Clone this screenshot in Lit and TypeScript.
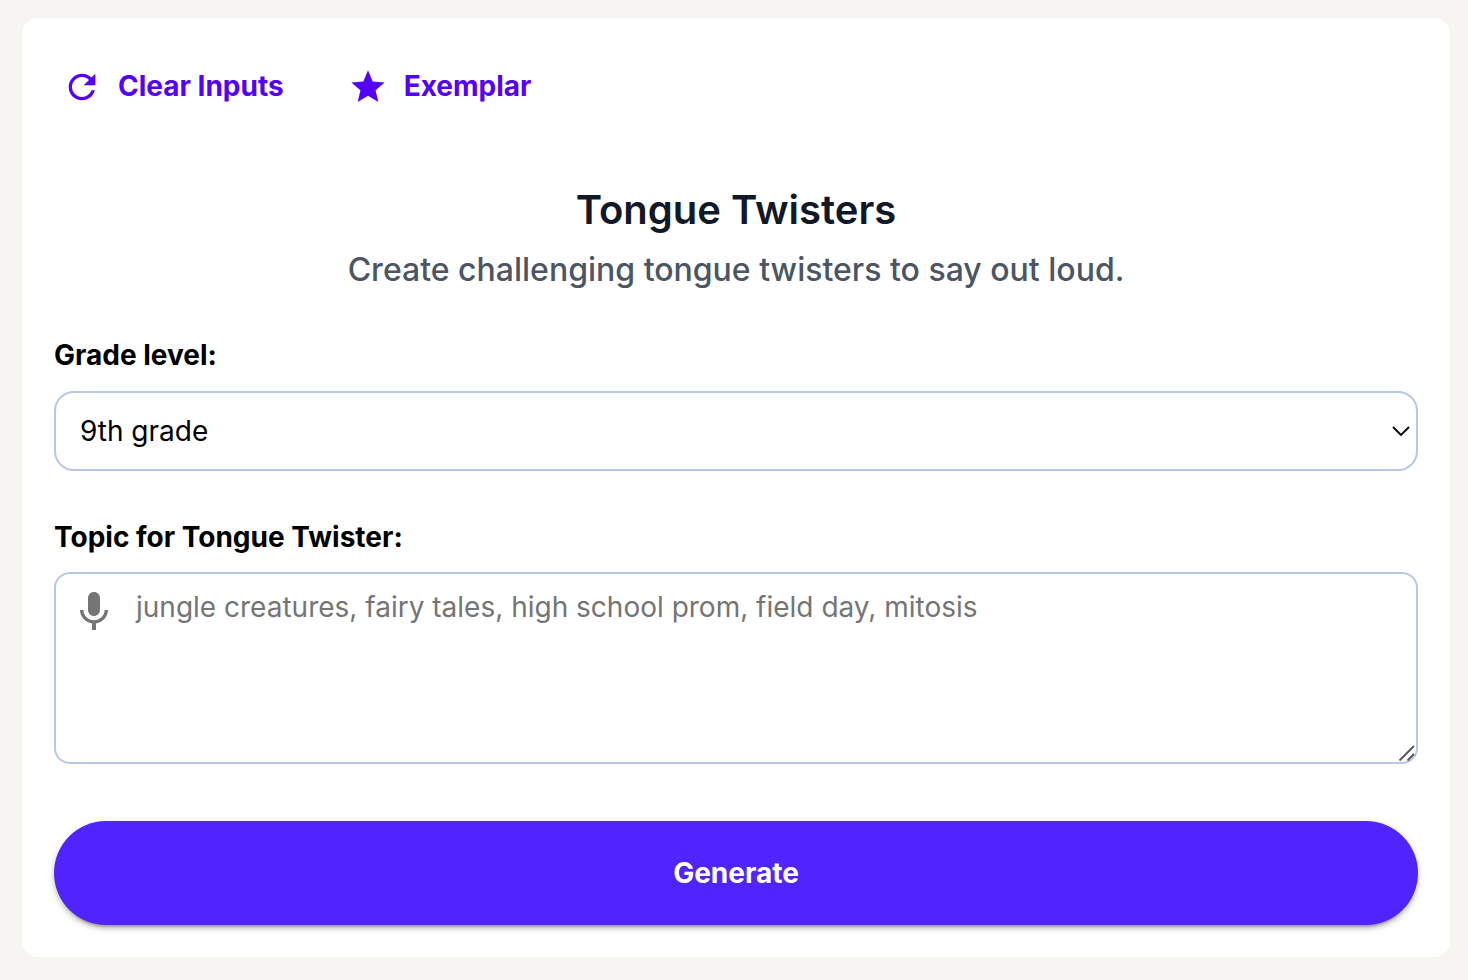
import {LitElement, html, css} from 'lit';
import {customElement, property, state} from 'lit/decorators.js';

@customElement('action-link')
export class ActionLink extends LitElement {
  static override styles = css`
    :host {
      display: inline-flex;
    }

    button {
      display: inline-flex;
      align-items: center;
      gap: 16px;
      height: 40px;
      padding: 0;
      border: none;
      background: none;
      color: #5300ff;
      font: inherit;
      font-size: 28px;
      font-weight: 700;
      line-height: 40px;
      white-space: nowrap;
      cursor: pointer;
    }

    span {
      padding-bottom: 2px;
    }

    svg {
      width: 40px;
      height: 40px;
      fill: currentColor;
    }
  `;

  @property() label = '';
  @property() icon: 'refresh' | 'star' = 'refresh';

  private get path(): string {
    return this.icon === 'refresh'
      ? 'M17.65 6.35C16.2 4.9 14.21 4 12 4c-4.42 0-7.99 3.58-7.99 8s3.57 8 7.99 8c3.73 0 6.84-2.55 7.73-6h-2.08c-.82 2.33-3.04 4-5.65 4-3.31 0-6-2.69-6-6s2.69-6 6-6c1.66 0 3.14.69 4.22 1.78L13 11h7V4l-2.35 2.35z'
      : 'M12 17.27 18.18 21l-1.64-7.03L22 9.24l-7.19-.61L12 2 9.19 8.63 2 9.24l5.46 4.73L5.82 21z';
  }

  override render() {
    return html`
      <button type="button">
        <svg viewBox="0 0 24 24" aria-hidden="true">
          <path d=${this.path} />
        </svg>
        <span>${this.label}</span>
      </button>
    `;
  }
}

@customElement('app-root')
export class AppRoot extends LitElement {
  static override styles = css`
    :host {
      display: block;
      box-sizing: border-box;
      height: 980px;
      padding: 18px 18px 23px 22px;
      background: #f6f5f1;
      color: #000;
      font-family: Inter, 'Liberation Sans', sans-serif;
      font-optical-sizing: none;
      font-size: 28px;
    }

    * {
      box-sizing: border-box;
    }

    .card {
      display: flex;
      flex-direction: column;
      height: 939px;
      padding: 49px 32px 32px;
      border-radius: 16px;
      background: #fff;
    }

    .toolbar {
      display: flex;
      gap: 64px;
      padding-left: 8px;
    }

    h1,
    p {
      margin: 0;
      text-align: center;
    }

    h1 {
      margin-top: 75px;
      color: #111827;
      font-size: 40px;
      font-weight: 600;
      line-height: 56px;
    }

    p {
      margin-top: 8px;
      color: #4b5563;
      font-size: 32px;
      font-weight: 500;
      line-height: 48px;
    }

    label {
      font-weight: 700;
      line-height: 40px;
    }

    .grade-label {
      margin-top: 41px;
    }

    .select {
      display: flex;
      align-items: center;
      justify-content: space-between;
      height: 80px;
      margin-top: 16px;
      padding: 0 6px 0 24px;
      border: 2px solid #b8c7e8;
      border-radius: 20px;
    }

    .chevron {
      width: 18px;
      height: 12px;
      fill: none;
      stroke: #000;
      stroke-width: 1.8;
    }

    .topic-label {
      margin-top: 46px;
    }

    .topic {
      display: flex;
      position: relative;
      height: 192px;
      margin-top: 15px;
      padding: 13px 14px 0;
      gap: 14px;
      border: 2px solid #b8c7e8;
      border-radius: 16px;
    }

    .mic {
      flex: none;
      width: 48px;
      height: 48px;
      margin-top: 1px;
      fill: #757575;
    }

    /* the indent keeps the tail of a leading "j" from being clipped */
    textarea {
      flex: 1;
      height: 160px;
      padding: 0;
      border: none;
      outline: none;
      background: none;
      resize: none;
      font: inherit;
      line-height: 40px;
      text-indent: 4px;
    }

    textarea::placeholder {
      color: #757575;
    }

    .grip {
      position: absolute;
      right: 0;
      bottom: 0;
      width: 18px;
      height: 18px;
      fill: none;
      stroke: #555;
      stroke-width: 1.8;
    }

    .generate {
      height: 104px;
      margin-top: 57px;
      padding: 0;
      border: none;
      border-radius: 52px;
      background: #5024ff;
      box-shadow:
        0 6px 2px -4px rgba(0, 0, 0, 0.2),
        0 4px 4px 0 rgba(0, 0, 0, 0.14),
        0 2px 10px 0 rgba(0, 0, 0, 0.12);
      color: #fff;
      font: inherit;
      font-weight: 700;
      cursor: pointer;
    }
  `;

  @state() private grade = '9th grade';

  override render() {
    return html`
      <main class="card">
        <div class="toolbar">
          <action-link icon="refresh" label="Clear Inputs"></action-link>
          <action-link icon="star" label="Exemplar"></action-link>
        </div>

        <h1>Tongue Twisters</h1>
        <p>Create challenging tongue twisters to say out loud.</p>

        <label class="grade-label">Grade level:</label>
        <div class="select" role="combobox">
          <span>${this.grade}</span>
          <svg class="chevron" viewBox="0 0 18 12" aria-hidden="true">
            <path d="M1 2l8 8 8-8" />
          </svg>
        </div>

        <label class="topic-label" for="topic">Topic for Tongue Twister:</label>
        <div class="topic">
          <svg class="mic" viewBox="0 0 24 24" aria-hidden="true">
            <path
              d="M12 14c1.66 0 2.99-1.34 2.99-3L15 5c0-1.66-1.34-3-3-3S9 3.34 9 5v6c0 1.66 1.34 3 3 3zm5.3-3c0 3-2.54 5.1-5.3 5.1S6.7 14 6.7 11H5c0 3.41 2.72 6.23 6 6.72V21h2v-3.28c3.28-.48 6-3.3 6-6.72h-1.7z"
            />
          </svg>
          <textarea
            id="topic"
            placeholder="jungle creatures, fairy tales, high school prom, field day, mitosis"
          ></textarea>
          <svg class="grip" viewBox="0 0 18 18" aria-hidden="true">
            <path d="M1.5 16.5l14.5-14.5M9.5 16.5l6.5-6.5" />
          </svg>
        </div>

        <button class="generate" type="button">Generate</button>
      </main>
    `;
  }
}

declare global {
  interface HTMLElementTagNameMap {
    'action-link': ActionLink;
    'app-root': AppRoot;
  }
}
